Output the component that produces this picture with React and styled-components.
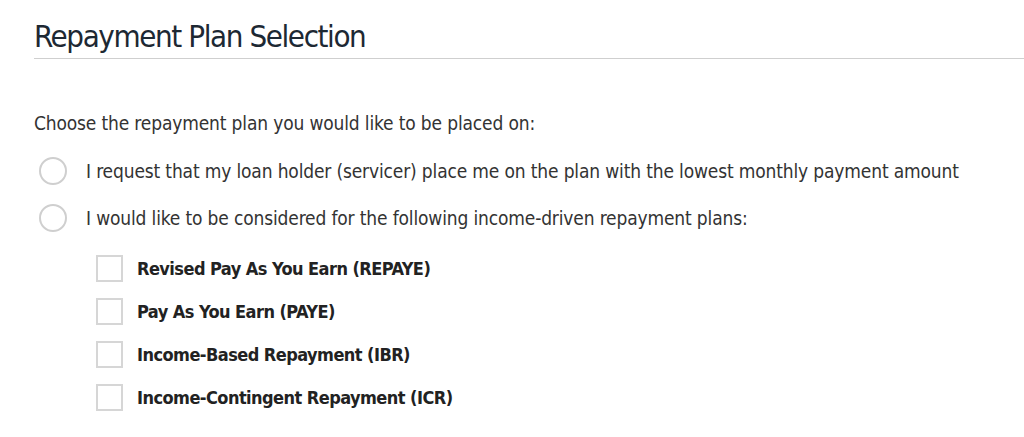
import React from 'react';
import styled, { createGlobalStyle } from 'styled-components';

const Global = createGlobalStyle`
  body {
    margin: 0;
    background: #fff;
    font-family: "DejaVu Sans Condensed", "DejaVu Sans", sans-serif;
    font-stretch: condensed;
  }
`;

const plans = [
  'Revised Pay As You Earn (REPAYE)',
  'Pay As You Earn (PAYE)',
  'Income-Based Repayment (IBR)',
  'Income-Contingent Repayment (ICR)',
];

const App = () => {
  return (
    <Wrapper>
      <Global />
      <Title>Repayment Plan Selection</Title>
      <Section>
        <Prompt>Choose the repayment plan you would like to be placed on:</Prompt>
        <Option>
          <Radio />
          <Label>I request that my loan holder (servicer) place me on the plan with the lowest monthly payment amount</Label>
        </Option>
        <Option>
          <Radio />
          <Label>I would like to be considered for the following income-driven repayment plans:</Label>
        </Option>
        <Plans>
          {plans.map(p => (
            <Plan key={p}>
              <Box />
              <PlanLabel>{p}</PlanLabel>
            </Plan>
          ))}
        </Plans>
      </Section>
    </Wrapper>
  )
}

const Wrapper = styled.div`
  padding: 16px 0 0 34px;
`

const Title = styled.h2`
  margin: 0;
  font-size: 31px;
  font-weight: 400;
  letter-spacing: -1.4px;
  color: #1d2833;
  line-height: 40px;
  padding-bottom: 2px;
  border-bottom: 1px solid #cfcfcf;
`

const Section = styled.div`
  padding-top: 52px;
`

const Prompt = styled.p`
  margin: 0 0 12px;
  font-size: 19px;
  letter-spacing: -0.15px;
  line-height: 24px;
  color: #333;
`

const Option = styled.div`
  display: flex;
  align-items: center;
  gap: 19px;
  margin-left: 5px;
  height: 47px;
`

const Radio = styled.span`
  width: 24px;
  height: 24px;
  border: 2px solid #cfcfcf;
  border-radius: 50%;
  flex-shrink: 0;
`

const Label = styled.span`
  font-size: 19px;
  letter-spacing: -0.15px;
  color: #333;
`

const Plans = styled.div`
  margin: 6px 0 0 62px;
  display: flex;
  flex-direction: column;
`

const Plan = styled.div`
  display: flex;
  align-items: center;
  gap: 14px;
  height: 43px;
`

const Box = styled.span`
  width: 23px;
  height: 23px;
  border: 2px solid #d6d6d6;
  flex-shrink: 0;
`

const PlanLabel = styled.span`
  font-size: 18px;
  font-weight: 700;
  letter-spacing: -0.55px;
  color: #222;
`

export default App
